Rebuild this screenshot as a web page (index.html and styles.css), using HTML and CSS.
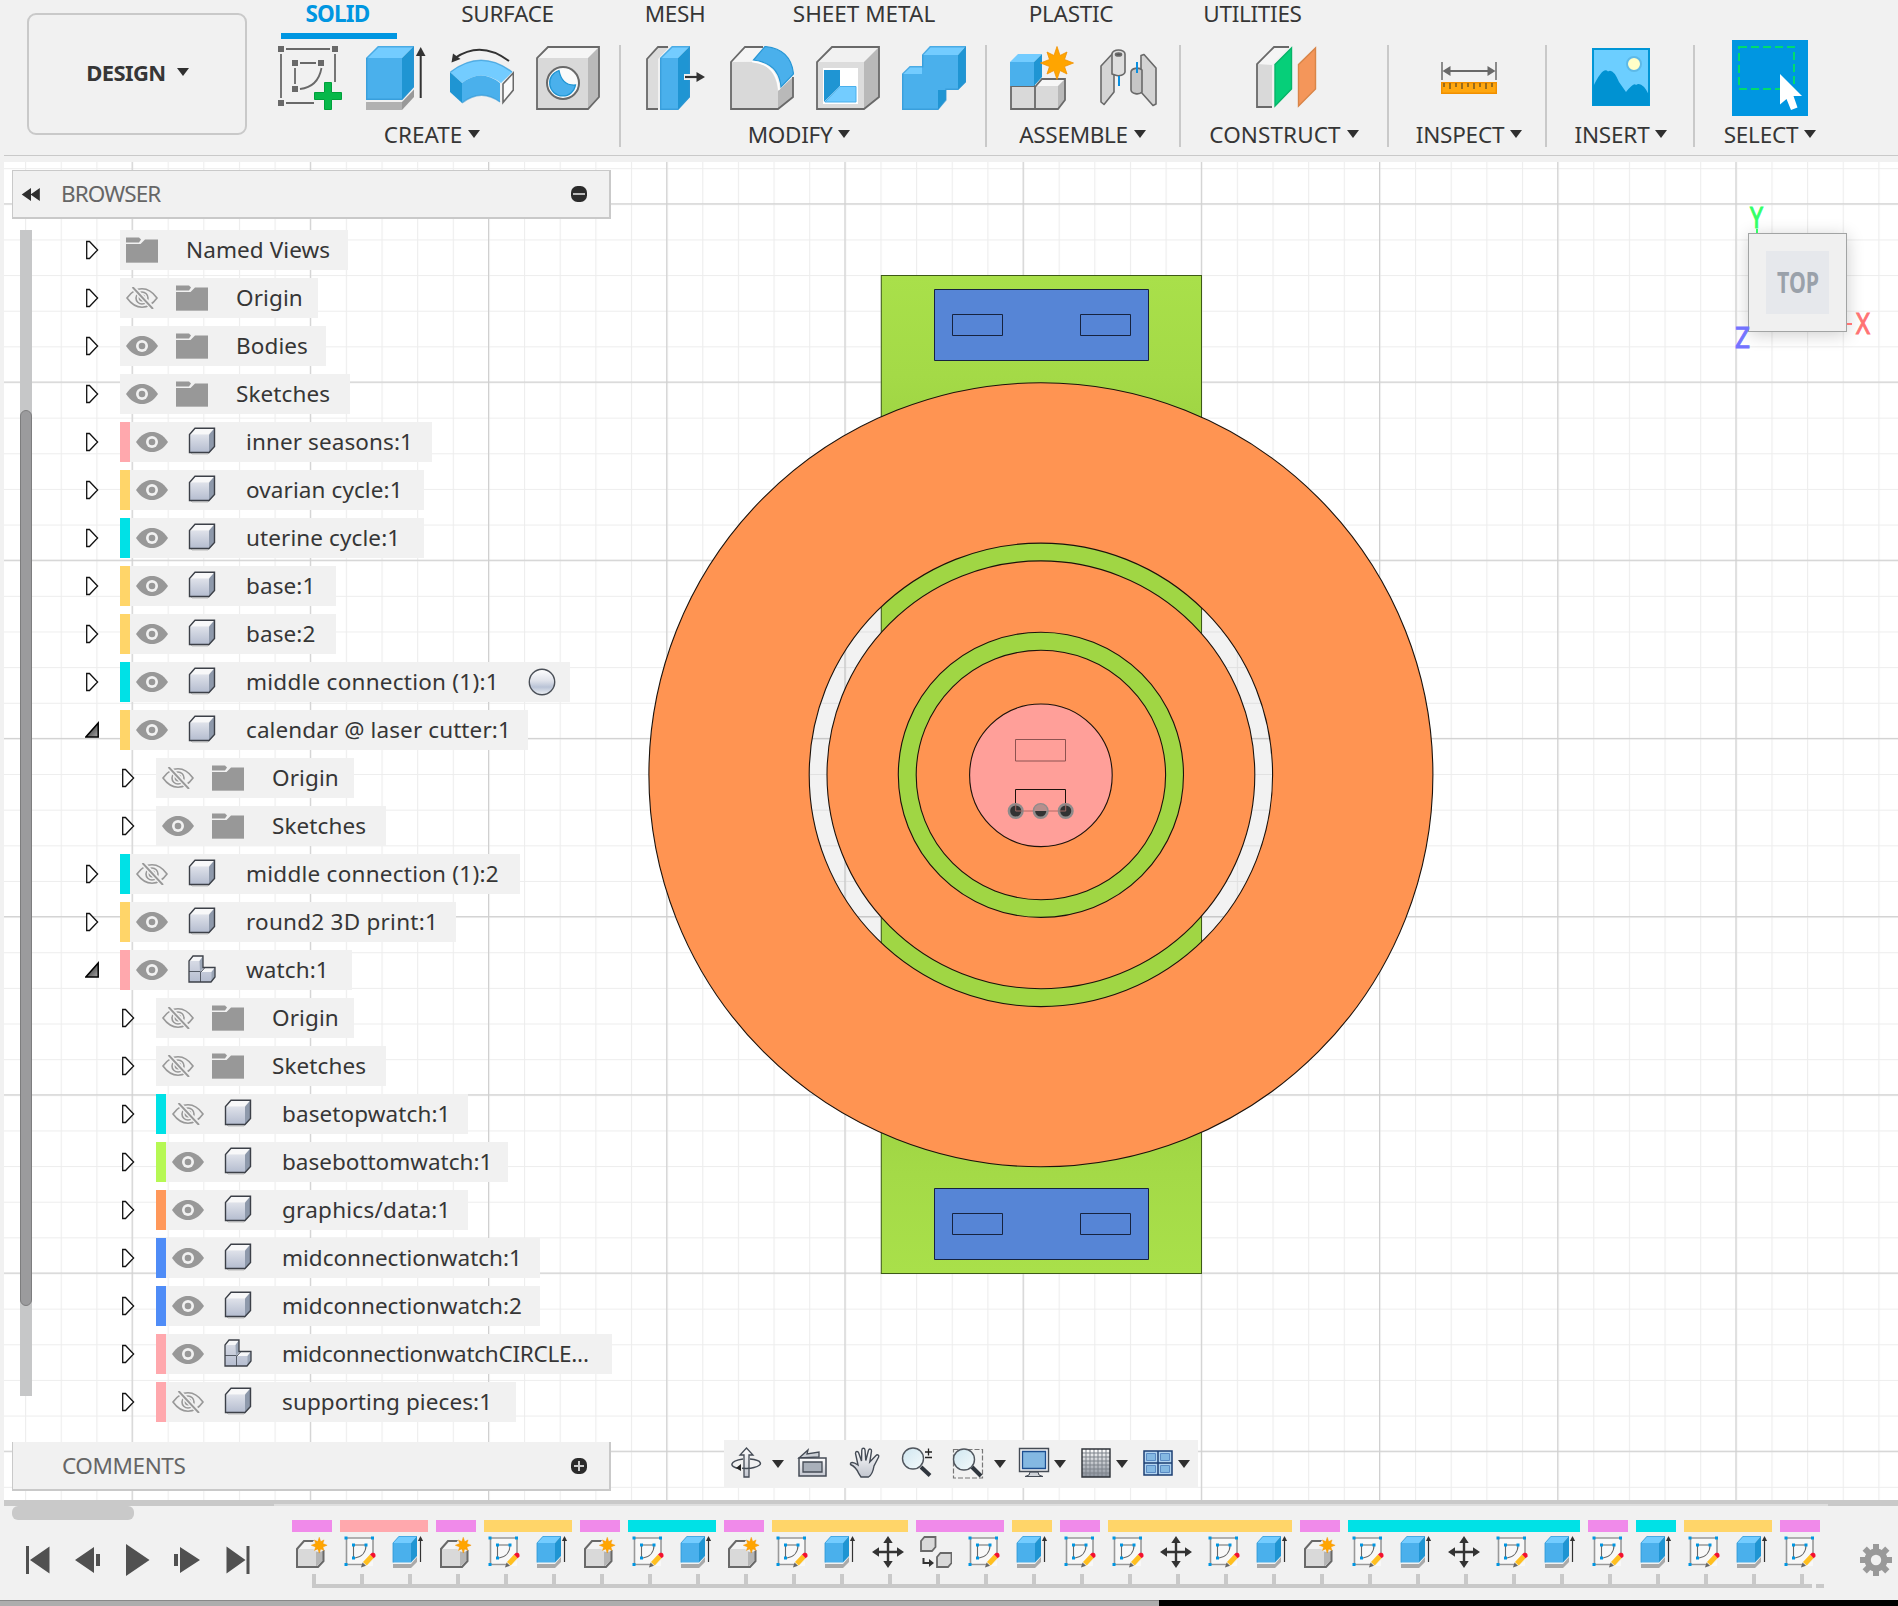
FILE: index.html
```html
<!DOCTYPE html>
<html lang="en">
<head>
<meta charset="utf-8">
<title>Design workspace</title>
<link rel="stylesheet" href="styles.css">
</head>
<body>
<svg class="defs" width="0" height="0">
  <defs>
    <linearGradient id="g-body" x1="0" y1="0" x2="0" y2="1"><stop offset="0" stop-color="#dfe2ea"/><stop offset="1" stop-color="#b4bccf"/></linearGradient>
    <linearGradient id="g-ball" x1="0" y1="0" x2="0" y2="1"><stop offset="0" stop-color="#ffffff"/><stop offset=".45" stop-color="#dfe2ea"/><stop offset=".7" stop-color="#b9c3d6"/><stop offset="1" stop-color="#eef1f5"/></linearGradient>
    <linearGradient id="g-open" x1="0" y1="0" x2="1" y2="1"><stop offset="0" stop-color="#111"/><stop offset="1" stop-color="#aaa"/></linearGradient>
    <linearGradient id="g-lens" x1="0" y1="0" x2="1" y2="1"><stop offset="0" stop-color="#cfe6f0"/><stop offset="1" stop-color="#f4fafb"/></linearGradient>
    <linearGradient id="g-steel" x1="0" y1="0" x2="0" y2="1"><stop offset="0" stop-color="#ffffff"/><stop offset="1" stop-color="#c2c6cf"/></linearGradient>
    <linearGradient id="g-mesh" x1="0" y1="0" x2="0" y2="1"><stop offset="0" stop-color="#ffffff"/><stop offset="1" stop-color="#8b929d"/></linearGradient>
    <symbol id="closed" viewBox="0 0 14 20"><path d="M1.700 1.500H4.500L12.600 10 4.500 18.500H1.700z" fill="#fff" stroke="#111" stroke-width="1.300"/></symbol>
    <symbol id="open" viewBox="0 0 14 16"><path d="M13.200 1V15H.8z" fill="url(#g-open)" stroke="#000" stroke-width="1.500"/></symbol>
    <symbol id="eye" viewBox="0 0 32 22"><path d="M0 11C5 3.500 10.500 1 16 1s11 2.500 16 10c-5 7.500-10.500 10-16 10S5 18.500 0 11z" fill="#989898"/><circle cx="16" cy="11" r="6" fill="#f1f1f1"/><circle cx="16" cy="11" r="3.300" fill="#989898"/></symbol>
    <symbol id="eye-off" viewBox="0 0 32 22"><g fill="none" stroke="#989898" stroke-width="1.600"><path d="M1 11C6 4 11 1.800 16 1.800S26 4 31 11c-5 7-10 9.200-15 9.200S6 18 1 11z"/><circle cx="16" cy="11" r="6"/><circle cx="16" cy="11" r="2.600"/></g><path d="M6.500 0L27.500 22" stroke="#f1f1f1" stroke-width="5"/><path d="M6.500 0L27 22" stroke="#989898" stroke-width="1.900"/></symbol>
    <symbol id="folder" viewBox="0 0 32 26"><path d="M0 .5h13l2 2-2 3H0z" fill="#989898"/><path d="M0 7h14.500l4.500-4.500h13V26H0z" fill="#989898"/><path d="M0 25.500H32" stroke="#b5b5b5"/></symbol>
    <symbol id="body" viewBox="0 0 28 28"><path d="M2 24.500L4 27H20l7-8" fill="none" stroke="#bbb"/><path d="M1.500 7.500L7 1.200H26.500L21 7.500z" fill="#f8f8f9"/><path d="M21 7.500l5.500-6.300V19L21 25.500z" fill="#8e99ab"/><path d="M1.500 7.500H21v18H1.500z" fill="url(#g-body)"/><path d="M1.500 25.500V7.500L7 1.200H26.500V19.500L21 25.500z" fill="none" stroke="#3c4048" stroke-width="1.400"/></symbol>
    <symbol id="assembly" viewBox="0 0 28 28"><path d="M1 27V6L5 1H15V12.500l2 0H27V22L23 27z" fill="url(#g-body)"/><path d="M1 6L5 1H15L11.500 6zM13 17l4-4.500H27L23.500 17z" fill="#f6f7f9"/><path d="M11.500 6L15 1V13L12 16.500zM23.500 17L27 12.500V22l-3.500 5z" fill="#9aa5b6"/><path d="M1 16.500H12M12.500 16.500V27M13 17l4-4.500" stroke="#555b66" fill="none"/><path d="M1 27V6L5 1H15V12.500H27V22L23 27z" fill="none" stroke="#3c4048" stroke-width="1.300"/></symbol>
    <symbol id="star" viewBox="-17 -17 34 34"><path d="M0-16.500L3-7.500 10-11 7.500-3.500 16.500 0 7.500 3.500 10 11 3 7.500 0 16.500-3 7.500-10 11-7.500 3.500-16.500 0-7.500-3.500-10-11-3-7.500z" fill="#ffa500" stroke="#f19000" stroke-width=".8"/></symbol>
    <symbol id="t-new" viewBox="0 0 32 32"><path d="M1 14L8 5H20L14 13z" fill="#f4f4f4"/><path d="M1 13H20V31H1z" fill="#d9d9d9"/><path d="M20 13l7-7V24l-7 7z" fill="#b5b5b5"/><path d="M18 5H8L1 13V31H22l5.500-6V14" fill="none" stroke="#696969" stroke-width="2"/><circle cx="23" cy="9" r="7" fill="#f1f1f1"/><use href="#star" x="15" y="1" width="16.500" height="16.500"/></symbol>
    <symbol id="t-sketch" viewBox="0 0 32 32"><path d="M3 2H29V30H3z" fill="#f8f8f8"/><path d="M3 2H29M2.500 2V29M29 3V18M3 28.500H18" stroke="#999" stroke-width="1.600" fill="none"/><path d="M9.500 9V22M10 9H22M22 9C22 16 18 21 11 22" stroke="#696969" stroke-width="1.100" fill="none"/><path d="M0.500 0.500h3v3h-3zM27 .5h3v3h-3zM.5 27h3v3h-3zM8 7.500h3v3H8zM20.500 7.500h3v3h-3zM8 20.500h3v3H8z" fill="#0096e1"/><path d="M18 31l2-6 8-8 4 5-8 7z" fill="#f1f1f1"/><path d="M17 31.500l1.500-5 3.500 3.200z" fill="#666"/><path d="M19 26l7-7.500 3.700 3.500-7 7.500z" fill="#ffbf1f"/><path d="M26 18.500l2-1.700q4-.8 3.500 3.700l-1.800 1.700z" fill="#f3102f"/></symbol>
    <symbol id="t-extrude" viewBox="0 0 32 32"><path d="M1 28H19V32H1zM19 28l6-7v5l-6 6z" fill="#a9a9a9"/><path d="M1 7L7 0H25L19 7z" fill="#73ccff"/><path d="M1 7H19V26.500H1z" fill="#4ab0ec"/><path d="M19 7l6-7V20l-6 6.500z" fill="#1f95d3"/><path d="M1 26.500V7L7 .3H25" fill="none" stroke="#2c97d5" stroke-width=".8"/><path d="M28.500 4V26" stroke="#333" stroke-width="1.200"/><path d="M28.500 0l2.600 5h-5.200z" fill="#333"/></symbol>
    <symbol id="t-move" viewBox="0 0 32 32"><path d="M16 4V28M4 16H28" stroke="#333" stroke-width="2.400"/><path d="M16 0l4.700 7h-9.400zM16 32l4.700-7h-9.400zM0 16l7-4.700v9.400zM32 16l-7-4.700v9.400z" fill="#333"/></symbol>
    <symbol id="t-copy" viewBox="0 0 32 32"><g fill="#d9d9d9" stroke="#696969" stroke-width="1.800"><path d="M1 15V5l3.500-4H15.500V11l-3.500 4zM17 31V21l3.500-4H31.500V27L28 31z"/></g><path d="M3.500 22v5H10" stroke="#333" stroke-width="2" fill="none"/><path d="M14 27l-5-4v8z" fill="#333"/></symbol>
    <symbol id="caret" viewBox="0 0 12 8"><path d="M0 0H12L6 8z" fill="#2f2f2f"/></symbol>
  </defs>
</svg>

<header class="ribbon">
  <button class="workspace">DESIGN<svg class="caret"><use href="#caret"/></svg></button>
  <div class="ribbon-main">
    <nav class="tabs">
      <span class="tab active">SOLID</span><span class="tab">SURFACE</span><span class="tab">MESH</span><span class="tab sheet">SHEET METAL</span><span class="tab">PLASTIC</span><span class="tab">UTILITIES</span>
    </nav>
    <div class="tools">
      <section class="group create">
        <div class="icons">
          <svg viewBox="0 0 64 64"><g stroke="#696969" stroke-width="1.800" fill="none"><path d="M8 3H52M3 8V52M57 8V36M8 57H36M22 17H38M17 22V38M43.500 22Q40 41 22 43"/></g><path d="M0 0h6v6H0zM54 0h6v6h-6zM0 54h6v6H0zM14 14h6v6h-6zM40 14h6v6h-6zM14 40h6v6h-6z" fill="#696969"/><path d="M46.500 36.500h7v10h10v7h-10v10h-7v-10h-10v-7h10z" fill="#07b84a" stroke="#00a03b"/></svg>
          <svg viewBox="0 0 64 64"><path d="M2 56H38V64H2z" fill="#b1b1b1"/><path d="M38 56L50 43.500V51L38 64z" fill="#999"/><path d="M2 12L14 0H50L38 12z" fill="#73ccff"/><path d="M2 12H38V54H2z" fill="#4ab0ec"/><path d="M38 12L50 0V41L38 54z" fill="#1f95d3"/><path d="M2.700 53.300V12.300L14.300.7H49.300V41L38 53.300z" fill="none" stroke="#2f95d2" stroke-opacity=".6" stroke-width="1.400"/><path d="M56.700 8V52" stroke="#333" stroke-width="2"/><path d="M56.700 1l4.800 9h-9.600z" fill="#333"/></svg>
          <svg viewBox="0 0 64 64"><path d="M0 26Q31 2 62.500 26L51 37Q31 22 12 37z" fill="#73ccff"/><path d="M12 37Q31 22 50 37V56Q31 42 12 57z" fill="#4ab0ec"/><path d="M0 26L12 37V57L0 46z" fill="#1f95d3"/><path d="M.5 26Q31 2.500 62 26M12 57Q31 42 50 56" fill="none" stroke="#2f95d2" stroke-opacity=".6" stroke-width="1.500"/><path d="M53 38L63.300 27V44L53 56.500z" fill="#fafafa" stroke="#696969" stroke-width="1.600"/><path d="M59 15Q31-6 5 12" fill="none" stroke="#333" stroke-width="2"/><path d="M1.500 16.500l1.500-9 7.500 5.500z" fill="#333"/></svg>
          <svg viewBox="0 0 64 64"><path d="M1 12L12 1H63L52 12z" fill="#f5f5f5"/><path d="M1 12H52V63H1z" fill="#d9d9d9"/><path d="M52 12L63 1V51L52 63z" fill="#b9b9b9"/><path d="M1 63V12L12 1H63V51L52 63z" fill="none" stroke="#696969" stroke-width="1.800"/><circle cx="27" cy="37" r="16" fill="#fafafa" stroke="#696969" stroke-width="2"/><path d="M23 24.500a13 13 0 1 0 16.500 14.500Q26 40 23 24.500z" fill="#4ab0ec" stroke="#1f95d3" stroke-width="1.300"/></svg>
        </div>
        <div class="label">CREATE<svg class="caret"><use href="#caret"/></svg></div>
      </section>
      <section class="group modify">
        <div class="icons">
          <svg viewBox="0 0 64 64"><path d="M3 13L14 1H25L14 13V63H3z" fill="#dcdcdc"/><path d="M14 63H3V13L14 1H24" fill="none" stroke="#696969" stroke-width="1.800"/><path d="M16 12L28 0H46L34 12z" fill="#73ccff"/><path d="M16 12H34V64H16z" fill="#4ab0ec"/><path d="M34 12L46 0V51L34 64z" fill="#1f95d3"/><path d="M16.700 63.300V12.300L28.300.7H45.300V51L34 63.300z" fill="none" stroke="#2f95d2" stroke-opacity=".6" stroke-width="1.400"/><path d="M40 31H54" stroke="#f1f1f1" stroke-width="6"/><path d="M41 31H54" stroke="#333" stroke-width="2.200"/><path d="M61 31l-8.500-5v10z" fill="#333"/></svg>
          <svg viewBox="0 0 64 64"><path d="M1 16L15 1H34L23 15z" fill="#f5f5f5"/><path d="M1 16H22Q46 18 48 46V63H1z" fill="#d9d9d9"/><path d="M48 45L63 31V51L48 63z" fill="#b9b9b9"/><path d="M33 1H15L1 16V63H48L63 51V31" fill="none" stroke="#696969" stroke-width="1.800"/><path d="M23.500 14L35 .5Q61 3 63.500 28L51 41Q49 17 23.500 14z" fill="#4ab0ec" stroke="#2796d5" stroke-width="1.200"/><path d="M22 15.500Q47 18 49 44" fill="none" stroke="#fff" stroke-width="1.500"/></svg>
          <svg viewBox="0 0 64 64"><path d="M1 16L16 1H63L48 16z" fill="#f1f1f1"/><path d="M1 16H48V63H1z" fill="#dcdcdc"/><path d="M48 16L63 1V51L48 63z" fill="#b9b9b9"/><path d="M1 63V16L16 1H63V51L48 63z" fill="none" stroke="#696969" stroke-width="1.800"/><path d="M7 22H42V58H7z" fill="#fff"/><path d="M8 24H24V40L8 56z" fill="#1f95d3"/><path d="M24 40.500H40V56H9z" fill="#73ccff" stroke="#4ab0ec"/></svg>
          <svg viewBox="0 0 64 64"><path d="M0 28L8 20H20V9L28 0H64L56 9V20L20 28z" fill="#73ccff"/><path d="M0 28H20V9H56V44H36V64H0z" fill="#4ab0ec"/><path d="M56 9L64 0V36L56 44zM36 44H44V54L36 64z" fill="#1f95d3"/><path d="M.7 63.300V27.700L8 20.700H20.700V8.700L28.300.7H63.300V36L56 43.300H44V54L36 63.300z" fill="none" stroke="#2f95d2" stroke-opacity=".6" stroke-width="1.400"/></svg>
        </div>
        <div class="label">MODIFY<svg class="caret"><use href="#caret"/></svg></div>
      </section>
      <section class="group assemble">
        <div class="icons">
          <svg viewBox="0 0 64 64"><path d="M1 40H25V63H1zM25 40H48V63H25z" fill="#d9d9d9"/><path d="M25 40L33 33H55L48 40z" fill="#f6f6f6"/><path d="M48 40L55 33V54L48 63z" fill="#b9b9b9"/><path d="M1 40V63H48L55 54V33H32L25 41V63M1 40H25" fill="none" stroke="#696969" stroke-width="1.800"/><path d="M0 16L8 8H32L24 16z" fill="#73ccff"/><path d="M0 16H24V40H0z" fill="#4ab0ec"/><path d="M24 16L32 8V31L24 40z" fill="#1f95d3"/><circle cx="47" cy="18" r="14" fill="#f1f1f1"/><use href="#star" x="30" y="0" width="34" height="34"/></svg>
          <svg viewBox="0 0 64 64"><g stroke="#696969" stroke-width="1.600" stroke-linejoin="round"><path d="M5 20L18 6V46L8 58.500 5 56z" fill="#d4d4d4"/><path d="M16 8a6.500 4 0 0 1 13 0V26a6.500 4 0 0 1-10 3L16 28z" fill="#dedede"/><ellipse cx="22.500" cy="8.500" rx="3" ry="1.500" fill="#555"/><path d="M45 9.500L48 8.500 60 22V58L57 59.500 45 46z" fill="#d4d4d4"/><path d="M35 26a6 4 0 0 1 11-2V46a6 4 0 0 1-11-2z" fill="#c6c6c6"/></g><path d="M23 30V40M41 16V27" stroke="#0a8fe0" stroke-width="2"/></svg>
        </div>
        <div class="label">ASSEMBLE<svg class="caret"><use href="#caret"/></svg></div>
      </section>
      <section class="group construct">
        <div class="icons">
          <svg viewBox="0 0 64 64"><path d="M3 18H18V61H3z" fill="#d9d9d9"/><path d="M3 18L20 1H34L18 19z" fill="#f5f5f5"/><path d="M18 61H3V18L20 1H35" fill="none" stroke="#696969" stroke-width="1.800"/><path d="M21 18.500L37.500 2V43L21 60z" fill="#06cf79" stroke="#06b468" stroke-width="1.400"/><path d="M44.500 18.500L61.500 2V43L44.500 60z" fill="#f4965a" stroke="#d98548" stroke-width="1.400"/></svg>
        </div>
        <div class="label">CONSTRUCT<svg class="caret"><use href="#caret"/></svg></div>
      </section>
      <section class="group inspect">
        <div class="icons">
          <svg viewBox="0 0 64 64"><path d="M5 16V34M59 16V34" stroke="#696969" stroke-width="1.500"/><path d="M10 25H54" stroke="#696969" stroke-width="2.200"/><path d="M5.500 25l8-5v10zM58.500 25l-8-5v10z" fill="#696969"/><path d="M4.700 36.700H59.300V47.300H4.700z" fill="#ffa70f" stroke="#f19000" stroke-width="1.400"/><path d="M7 37v4M13 37v6M19 37v4M25 37v6M31 37v4M37 37v6M43 37v4M49 37v6M55 37v4" stroke="#7a5a20" stroke-width="1.500"/></svg>
        </div>
        <div class="label">INSPECT<svg class="caret"><use href="#caret"/></svg></div>
      </section>
      <section class="group insert">
        <div class="icons">
          <svg viewBox="0 0 64 64"><path d="M4 3H60V59H4z" fill="#6cceff" stroke="#0096d6" stroke-width="2"/><path d="M4 41Q14 20 19 25.500 24 22 30 36L37 46Q45 36 47 39 53 35 60 49V59H4z" fill="#0092d2"/><circle cx="45" cy="18" r="7" fill="#ffffc8" stroke="#5db9e8" stroke-width="2"/></svg>
        </div>
        <div class="label">INSERT<svg class="caret"><use href="#caret"/></svg></div>
      </section>
      <section class="group select">
        <div class="icons">
          <svg class="picked" viewBox="0 0 76 76"><path d="M0 0H76V76H0z" fill="#0096e1"/><path d="M7 7H62V49H7z" fill="none" stroke="#00dc6e" stroke-width="2" stroke-dasharray="8 4"/><path d="M48 34L70 56H61.500L65.500 67.500 59 70 54.500 59 48 64.500z" fill="#fff"/></svg>
        </div>
        <div class="label">SELECT<svg class="caret"><use href="#caret"/></svg></div>
      </section>
    </div>
  </div>
</header>

<main class="viewport">
  <svg class="scene" viewBox="4 162 1894 1338">
    <defs>
      <pattern id="minor" x="132" y="203.800" width="35.640" height="35.640" patternUnits="userSpaceOnUse"><path d="M0 0H35.640V1.100H0zM0 0H1.100V35.640H0z" fill="#ededed"/></pattern>
      <pattern id="major" x="131.600" y="203.300" width="178.200" height="178.200" patternUnits="userSpaceOnUse"><path d="M0 0H178.200V1.200H0zM0 0H1.200V178.200H0z" fill="#d0d0d0"/></pattern>
      <filter id="soft" x="-20%" y="-20%" width="140%" height="140%"><feGaussianBlur stdDeviation="9"/></filter>
      <linearGradient id="lime" x1="0" y1="0" x2="0" y2="1"><stop offset="0" stop-color="#a9e04a"/><stop offset=".1" stop-color="#a4da47"/><stop offset=".14" stop-color="#a0d644"/><stop offset=".86" stop-color="#a0d644"/><stop offset=".9" stop-color="#a4da47"/><stop offset="1" stop-color="#a9e04a"/></linearGradient>
    </defs>
    <rect x="4" y="162" width="1894" height="1338" fill="#fff"/>
    <rect x="4" y="162" width="1894" height="1338" fill="url(#minor)"/>
    <rect x="4" y="162" width="1894" height="1338" fill="url(#major)"/>
    <circle cx="1040.900" cy="774.800" r="222" fill="none" stroke="#000" stroke-opacity=".05" stroke-width="22"/>
    <rect x="881.300" y="275.500" width="320.200" height="998" fill="url(#lime)" stroke="#3d5a16"/>
    <path fill-rule="evenodd" d="M648.900 774.800a392 392 0 1 0 784 0a392 392 0 1 0-784 0zM809.200 774.800a231.700 231.700 0 1 0 463.400 0a231.700 231.700 0 1 0-463.400 0z" fill="#ff9452" stroke="#1c120b" stroke-width="1.100"/>
    <path fill-rule="evenodd" d="M827 774.800a213.900 213.900 0 1 0 427.800 0a213.900 213.900 0 1 0-427.800 0zM898.300 774.800a142.600 142.600 0 1 0 285.200 0a142.600 142.600 0 1 0-285.200 0z" fill="#ff9452" stroke="#1c120b" stroke-width="1.100"/>
    <circle cx="1040.900" cy="775" r="124.700" fill="#ff9452" stroke="#1c120b" stroke-width="1.100"/>
    <circle cx="1040.900" cy="775.300" r="71.300" fill="#ff9f99" stroke="#1c120b" stroke-width="1.100"/>
    <g fill="#5685d6" stroke="#16233f"><path d="M934.500 289.500H1148.500V360.500H934.500zM934.500 1188.500H1148.500V1259.500H934.500z"/></g>
    <path d="M952.500 314.500h50v21h-50zM1080.500 314.500h50v21h-50zM952.500 1213.500h50v21h-50zM1080.500 1213.500h50v21h-50z" fill="none" stroke="#16233f"/>
    <path d="M1015.500 739.500h50v21.500h-50z" fill="none" stroke="#8d5350"/>
    <path d="M1015.500 811V789.500h50V811" fill="none" stroke="#1c120b"/><path d="M1015.700 811h50" stroke="#b06a66"/>
    <g fill="#333" stroke="#8f8b8b" stroke-width="2.500"><circle cx="1015.700" cy="811" r="6.800"/><circle cx="1040.700" cy="811" r="6.800"/><circle cx="1065.700" cy="811" r="6.800"/></g>
    <path d="M1034 811a6.700 6.700 0 0 1 13.400 0z" fill="#b58f8d"/>
    <path d="M1015.700 811v-7M1015.700 811h7M1065.700 811v-7M1065.700 811h-7" stroke="#a06a66"/>
    <g class="viewcube">
      <rect x="1749" y="236" width="98" height="98" fill="#000" opacity=".2" filter="url(#soft)"/>
      <path d="M1757 229v5" stroke="#33ff66" stroke-width="2"/><path d="M1847 324h5" stroke="#ff7373" stroke-width="2"/>
      <rect x="1748.500" y="233.500" width="98" height="98" fill="#f0f0f0" stroke="#a2a4a4"/>
      <rect x="1766" y="251" width="63" height="63" fill="#e6e8ec"/>
      <text x="1777" y="293" textLength="42" lengthAdjust="spacingAndGlyphs" class="face">TOP</text>
      <text x="1750" y="228" textLength="13" lengthAdjust="spacingAndGlyphs" class="axis" fill="#33ff66" stroke="#33ff66">Y</text>
      <text x="1856" y="334" textLength="14" lengthAdjust="spacingAndGlyphs" class="axis" fill="#ff7373" stroke="#ff7373">X</text>
      <text x="1735" y="348" textLength="15" lengthAdjust="spacingAndGlyphs" class="axis" fill="#7373ff" stroke="#7373ff">Z</text>
    </g>
  </svg>

  <aside class="sidebar">
    <div class="panel-head browser">
      <svg class="rewind" viewBox="0 0 20 14"><path d="M10 0V14L0 7zM19.500 0V14L9.500 7z" fill="#2f2f2f"/></svg>
      <span>BROWSER</span>
      <svg class="toggle" viewBox="0 0 16 16"><rect width="16" height="16" rx="6.500" fill="#2b2b2b"/><path d="M2 8H14" stroke="#bbb" stroke-width="2"/></svg>
    </div>
    <div class="tree-wrap">
      <div class="track"><div class="thumb"></div></div>
      <ul class="tree">
        <li><svg class="tw"><use href="#closed"/></svg><div class="node" style="width:228px"><svg class="fo"><use href="#folder"/></svg><span>Named Views</span></div></li>
        <li><svg class="tw"><use href="#closed"/></svg><div class="node" style="width:198px"><svg class="ey"><use href="#eye-off"/></svg><svg class="fo"><use href="#folder"/></svg><span>Origin</span></div></li>
        <li><svg class="tw"><use href="#closed"/></svg><div class="node" style="width:206px"><svg class="ey"><use href="#eye"/></svg><svg class="fo"><use href="#folder"/></svg><span>Bodies</span></div></li>
        <li><svg class="tw"><use href="#closed"/></svg><div class="node" style="width:230px"><svg class="ey"><use href="#eye"/></svg><svg class="fo"><use href="#folder"/></svg><span>Sketches</span></div></li>
        <li><svg class="tw"><use href="#closed"/></svg><div class="node comp pink" style="width:312px"><svg class="ey"><use href="#eye"/></svg><svg class="bo"><use href="#body"/></svg><span>inner seasons:1</span></div></li>
        <li><svg class="tw"><use href="#closed"/></svg><div class="node comp yellow" style="width:304px"><svg class="ey"><use href="#eye"/></svg><svg class="bo"><use href="#body"/></svg><span>ovarian cycle:1</span></div></li>
        <li><svg class="tw"><use href="#closed"/></svg><div class="node comp cyan" style="width:304px"><svg class="ey"><use href="#eye"/></svg><svg class="bo"><use href="#body"/></svg><span>uterine cycle:1</span></div></li>
        <li><svg class="tw"><use href="#closed"/></svg><div class="node comp yellow" style="width:216px"><svg class="ey"><use href="#eye"/></svg><svg class="bo"><use href="#body"/></svg><span>base:1</span></div></li>
        <li><svg class="tw"><use href="#closed"/></svg><div class="node comp yellow" style="width:216px"><svg class="ey"><use href="#eye"/></svg><svg class="bo"><use href="#body"/></svg><span>base:2</span></div></li>
        <li><svg class="tw"><use href="#closed"/></svg><div class="node comp cyan" style="width:450px"><svg class="ey"><use href="#eye"/></svg><svg class="bo"><use href="#body"/></svg><span class="loose">middle connection (1):1</span><svg class="ball" viewBox="0 0 28 28"><circle cx="14" cy="14" r="12.700" fill="url(#g-ball)" stroke="#4a4f57" stroke-width="1.400"/></svg></div></li>
        <li><svg class="tw"><use href="#open"/></svg><div class="node comp yellow" style="width:408px"><svg class="ey"><use href="#eye"/></svg><svg class="bo"><use href="#body"/></svg><span>calendar @ laser cutter:1</span></div></li>
        <li class="deep"><svg class="tw"><use href="#closed"/></svg><div class="node" style="width:198px"><svg class="ey"><use href="#eye-off"/></svg><svg class="fo"><use href="#folder"/></svg><span>Origin</span></div></li>
        <li class="deep"><svg class="tw"><use href="#closed"/></svg><div class="node" style="width:230px"><svg class="ey"><use href="#eye"/></svg><svg class="fo"><use href="#folder"/></svg><span>Sketches</span></div></li>
        <li><svg class="tw"><use href="#closed"/></svg><div class="node comp cyan" style="width:400px"><svg class="ey"><use href="#eye-off"/></svg><svg class="bo"><use href="#body"/></svg><span class="loose">middle connection (1):2</span></div></li>
        <li><svg class="tw"><use href="#closed"/></svg><div class="node comp yellow" style="width:336px"><svg class="ey"><use href="#eye"/></svg><svg class="bo"><use href="#body"/></svg><span class="loose">round2 3D print:1</span></div></li>
        <li><svg class="tw"><use href="#open"/></svg><div class="node comp pink" style="width:232px"><svg class="ey"><use href="#eye"/></svg><svg class="bo"><use href="#assembly"/></svg><span>watch:1</span></div></li>
        <li class="deep"><svg class="tw"><use href="#closed"/></svg><div class="node" style="width:198px"><svg class="ey"><use href="#eye-off"/></svg><svg class="fo"><use href="#folder"/></svg><span>Origin</span></div></li>
        <li class="deep"><svg class="tw"><use href="#closed"/></svg><div class="node" style="width:230px"><svg class="ey"><use href="#eye-off"/></svg><svg class="fo"><use href="#folder"/></svg><span>Sketches</span></div></li>
        <li class="deep"><svg class="tw"><use href="#closed"/></svg><div class="node comp cyan" style="width:312px"><svg class="ey"><use href="#eye-off"/></svg><svg class="bo"><use href="#body"/></svg><span>basetopwatch:1</span></div></li>
        <li class="deep"><svg class="tw"><use href="#closed"/></svg><div class="node comp lime" style="width:352px"><svg class="ey"><use href="#eye"/></svg><svg class="bo"><use href="#body"/></svg><span class="tight">basebottomwatch:1</span></div></li>
        <li class="deep"><svg class="tw"><use href="#closed"/></svg><div class="node comp orange" style="width:312px"><svg class="ey"><use href="#eye"/></svg><svg class="bo"><use href="#body"/></svg><span class="loose">graphics/data:1</span></div></li>
        <li class="deep"><svg class="tw"><use href="#closed"/></svg><div class="node comp blue" style="width:384px"><svg class="ey"><use href="#eye"/></svg><svg class="bo"><use href="#body"/></svg><span class="tight">midconnectionwatch:1</span></div></li>
        <li class="deep"><svg class="tw"><use href="#closed"/></svg><div class="node comp blue" style="width:384px"><svg class="ey"><use href="#eye"/></svg><svg class="bo"><use href="#body"/></svg><span class="tight">midconnectionwatch:2</span></div></li>
        <li class="deep"><svg class="tw"><use href="#closed"/></svg><div class="node comp pink" style="width:456px"><svg class="ey"><use href="#eye"/></svg><svg class="bo"><use href="#assembly"/></svg><span class="long">midconnectionwatchCIRCLE...</span></div></li>
        <li class="deep"><svg class="tw"><use href="#closed"/></svg><div class="node comp pink" style="width:360px"><svg class="ey"><use href="#eye-off"/></svg><svg class="bo"><use href="#body"/></svg><span>supporting pieces:1</span></div></li>
      </ul>
    </div>
    <div class="panel-head comments">
      <span>COMMENTS</span>
      <svg class="toggle" viewBox="0 0 16 16"><rect width="16" height="16" rx="6.500" fill="#2b2b2b"/><path d="M3 8H13M8 3V13" stroke="#ccc" stroke-width="2"/></svg>
    </div>
  </aside>

  <div class="navbar">
    <svg class="tool orbit" viewBox="0 0 32 32"><path d="M13 24V8h-4L15.500 1 22 8h-4V30h-5z" fill="url(#g-steel)" stroke="#444b55" stroke-width="1.300"/><path d="M12 12C-2 14-2 20 8 21.500M19 12c12 1 14 6 4 8.500-3 1-9 1-12 .8" fill="none" stroke="#444b55" stroke-width="1.500"/><path d="M5 21l5-4v7z" fill="#222"/></svg>
    <svg class="caret"><use href="#caret"/></svg>
    <svg class="tool look" viewBox="0 0 32 32"><path d="M2 11L11 3l-1 4 12-2v5z" fill="#ccd0d6" stroke="#444b55" stroke-width="1.300"/><path d="M2 11H29V29H2z" fill="url(#g-steel)" stroke="#444b55" stroke-width="1.500"/><path d="M6 15H25V25H6z" fill="#a9b0ba" stroke="#444b55" stroke-width="1.300"/></svg>
    <svg class="tool hand" viewBox="0 0 32 32"><path d="M10 27C8 22 5 19 1.500 17.500 1 15 4 14.500 9 18L6.500 6.500c0-2.500 2.500-2.500 3.200-.5L12.500 14 12.800 3c.2-2.300 3-2.300 3.200 0L16.800 13.500 19.500 3.300c.8-2 3.300-1.400 3 .8L20.800 15 27 8.500c1.600-1.500 3.500 0 2.500 1.800L25 19c-1 6-2 9-5.500 11H12z" fill="url(#g-steel)" stroke="#444b55" stroke-width="1.400"/></svg>
    <svg class="tool zoom" viewBox="0 0 32 32"><path d="M20 20l9 8.500" stroke="#30363e" stroke-width="4"/><circle cx="12" cy="11.500" r="10.500" fill="url(#g-lens)" stroke="#50565e" stroke-width="1.400"/><path d="M24 5h7M27.500 1.500v7M24 10.500h7" stroke="#222" stroke-width="1.300"/></svg>
    <svg class="tool window" viewBox="0 0 32 32"><path d="M1.500 2.500H30.500V31H1.500z" fill="none" stroke="#777" stroke-width="1.200" stroke-dasharray="5 2"/><path d="M20 20l9 9" stroke="#30363e" stroke-width="4"/><circle cx="12" cy="12.500" r="10.500" fill="url(#g-lens)" stroke="#50565e" stroke-width="1.400"/></svg>
    <svg class="caret"><use href="#caret"/></svg>
    <svg class="tool display" viewBox="0 0 32 32"><path d="M12 25h8l1 3 4 1.500H7l4-1.500z" fill="#cfd3d8" stroke="#444b55"/><path d="M1.500 1.500H30.500V24.500H1.500z" fill="#f4f4f6" stroke="#444b55" stroke-width="1.400"/><path d="M4.500 4.500H27.500V21.500H4.500z" fill="#84b8e2" stroke="#1d4f91" stroke-width="1.300"/></svg>
    <svg class="caret"><use href="#caret"/></svg>
    <svg class="tool mesh" viewBox="0 0 32 32"><path d="M2 2H30V30H2z" fill="url(#g-mesh)"/><path d="M2 6H30M2 10H30M2 14H30M2 18H30M2 22H30M2 26H30M6 2V30M10 2V30M14 2V30M18 2V30M22 2V30M26 2V30" stroke="#7d828a"/><path d="M2 2H30V30H2z" fill="none" stroke="#2e3238" stroke-width="1.400"/></svg>
    <svg class="caret"><use href="#caret"/></svg>
    <svg class="tool views" viewBox="0 0 32 32"><path d="M2 4H30V28H2z" fill="#b4d5f0" stroke="#1d3f73" stroke-width="1.500"/><path d="M16 4V28M2 16H30" stroke="#1d3f73" stroke-width="1.500"/><path d="M4.500 6.500h9v7h-9zM18.500 6.500h9v7h-9zM4.500 18.500h9v7h-9zM18.500 18.500h9v7h-9z" fill="#84b8e2" stroke="#5a8bc4"/></svg>
    <svg class="caret"><use href="#caret"/></svg>
  </div>
</main>

<footer class="timeline">
  <div class="split"><i></i></div>
  <div class="hscroll"></div>
  <div class="timeline-row">
    <div class="playback">
      <svg viewBox="0 0 26 32"><path d="M1 2h3v28H1zM24.500 2.500V29.500L5 16z" fill="#505050"/></svg>
      <svg viewBox="0 0 26 32"><path d="M0 16L19 3V29zM21 10h4v12h-4z" fill="#505050"/></svg>
      <svg viewBox="0 0 26 32"><path d="M1 0V32L24.500 16z" fill="#505050"/></svg>
      <svg viewBox="0 0 26 32"><path d="M-1 10h4v12h-4zM5 3V29L25 16z" fill="#505050"/></svg>
      <svg viewBox="0 0 26 32"><path d="M21.500 2h3v28h-3zM1.500 2.500V29.500L20.500 16z" fill="#505050"/></svg>
    </div>
    <div class="history">
      <b class="violet"></b><b class="pink s2"></b><b class="violet"></b><b class="yellow s2"></b><b class="violet"></b><b class="cyan s2"></b><b class="violet"></b><b class="yellow s3"></b><b class="violet s2"></b><b class="yellow"></b><b class="violet"></b><b class="yellow s4"></b><b class="violet"></b><b class="cyan s5"></b><b class="violet"></b><b class="cyan"></b><b class="yellow s2"></b><b class="violet"></b>
      <svg><use href="#t-new"/></svg><svg><use href="#t-sketch"/></svg><svg><use href="#t-extrude"/></svg><svg><use href="#t-new"/></svg><svg><use href="#t-sketch"/></svg><svg><use href="#t-extrude"/></svg><svg><use href="#t-new"/></svg><svg><use href="#t-sketch"/></svg><svg><use href="#t-extrude"/></svg><svg><use href="#t-new"/></svg><svg><use href="#t-sketch"/></svg><svg><use href="#t-extrude"/></svg><svg><use href="#t-move"/></svg><svg><use href="#t-copy"/></svg><svg><use href="#t-sketch"/></svg><svg><use href="#t-extrude"/></svg><svg><use href="#t-sketch"/></svg><svg><use href="#t-sketch"/></svg><svg><use href="#t-move"/></svg><svg><use href="#t-sketch"/></svg><svg><use href="#t-extrude"/></svg><svg><use href="#t-new"/></svg><svg><use href="#t-sketch"/></svg><svg><use href="#t-extrude"/></svg><svg><use href="#t-move"/></svg><svg><use href="#t-sketch"/></svg><svg><use href="#t-extrude"/></svg><svg><use href="#t-sketch"/></svg><svg><use href="#t-extrude"/></svg><svg><use href="#t-sketch"/></svg><svg><use href="#t-extrude"/></svg><svg><use href="#t-sketch"/></svg>
      <div class="ruler"><i></i><u></u></div>
    </div>
    <svg class="gear" viewBox="-16 -16 32 32"><g fill="#999"><path id="cog" d="M-3-16H3V16H-3z"/><use href="#cog" transform="rotate(45)"/><use href="#cog" transform="rotate(90)"/><use href="#cog" transform="rotate(135)"/><circle r="11.500"/></g><circle r="5.200" fill="#f1f1f1"/></svg>
  </div>
  <div class="edge"><i></i></div>
</footer>
</body>
</html>
```
FILE: styles.css
```css
* { box-sizing: border-box; }
body {
  margin: 0;
  width: 1898px;
  height: 1606px;
  overflow: hidden;
  background: #f1f1f1;
  color: #363636;
  font: 22.5px/30px "Noto Sans", "Open Sans", sans-serif;
  display: flex;
  flex-direction: column;
}
svg { display: block; flex: none; }
.defs { position: absolute; }
.caret { width: 12px; height: 8px; }

/* Ribbon */
.ribbon { height: 162px; flex: none; display: flex; padding: 0 0 6px 4px; }
.ribbon { background: linear-gradient(#c9c9c9, #c9c9c9) 4px 155px / 100% 1px no-repeat; }
.workspace {
  margin: 13px 0 0 23px;
  width: 220px;
  height: 122px;
  border: 2px solid #c9c9c9;
  border-radius: 9px;
  background: none;
  color: inherit;
  font: bold 22px/30px "Noto Sans", sans-serif;
  letter-spacing: -0.6px;
  display: flex;
  align-items: center;
  justify-content: center;
  gap: 11px;
  padding: 0 0 4px 1px;
}
.ribbon-main { display: flex; flex-direction: column; }
.tabs { display: grid; grid-template-columns: 116px 221px 114px 264px 150px 213px; margin-left: 34px; height: 39px; text-align: center; letter-spacing: -0.3px; line-height: 27px; }
.tab.sheet { letter-spacing: 0; }
.tab.active { color: #0096e1; font-weight: bold; border-bottom: 6px solid #0096e1; letter-spacing: -0.8px; padding-right: 3px; }
.tools { display: flex; margin-left: 11px; }
.group {
  display: flex;
  flex-direction: column;
  align-items: center;
  padding: 7px 0 0 4px;
  height: 108px;
  background: linear-gradient(#c9c9c9, #c9c9c9) right 6px / 2px 102px no-repeat;
  border-right: 2px solid transparent;
  background-origin: border-box;
}
.create { width: 363px; padding-left: 1px; }
.modify { width: 366px; }
.assemble { width: 194px; }
.construct { width: 208px; }
.inspect { width: 158px; }
.insert { width: 148px; padding-left: 2px; }
.select { width: 148px; background: none; }
.icons { display: flex; gap: 22px; height: 64px; }
.icons svg { width: 64px; height: 64px; }
.icons .picked { width: 76px; height: 76px; margin-top: -6px; }
.label { display: flex; align-items: center; gap: 6px; line-height: 30px; margin-top: 10px; letter-spacing: -0.2px; padding-right: 4px; white-space: nowrap; }
.create .label { padding-right: 14px; letter-spacing: 0; }
.modify .label { padding-right: 12px; letter-spacing: -0.3px; }
.assemble .label { padding-right: 5px; letter-spacing: -0.3px; }
.construct .label { letter-spacing: 0.1px; }
.inspect .label, .insert .label, .select .label { padding-right: 0; }
.label .caret { margin-top: -3px; }

/* Canvas */
.viewport { position: relative; flex: none; height: 1338px; margin-left: 4px; display: flex; align-items: flex-start; }
.scene { position: absolute; inset: 0; width: 1894px; height: 1338px; }
.face { font: bold 29px "Noto Sans", sans-serif; fill: #9aa1aa; }
.axis { font: 29px "Noto Sans", sans-serif; stroke-width: 1px; }

/* Browser */
.sidebar { position: relative; width: 599px; margin: 8px 0 0 8px; }
.panel-head {
  height: 49px;
  border: 1px solid #c9c9c9;
  border-width: 1px 2px 2px 1px;
  background: #f1f1f1;
  color: #666;
  display: flex;
  align-items: center;
  padding: 0 22px 0 9px;
  letter-spacing: -0.4px;
}
.panel-head span { flex: 1; padding-left: 20px; }
.browser { letter-spacing: -0.9px; }
.rewind { width: 20px; height: 13px; margin-left: -1px; }
.toggle { width: 16px; height: 16px; }
.comments { margin-top: 20px; border-top: 0; padding: 0 22px 0 29px; }
.tree-wrap { display: flex; margin-top: 11px; }
.track { width: 12px; height: 1166px; margin-left: 8px; background: #c6c7c8; padding-top: 180px; }
.thumb { height: 896px; border: 1px solid #7d7d7e; border-radius: 6px; background: #9b9b9d; }
.tree { list-style: none; margin: 0; padding: 0; width: 580px; display: flex; flex-direction: column; gap: 8px; letter-spacing: 0.1px; }
.tree { height: 1192px; margin-right: -2px; }
.tree li { display: flex; align-items: center; height: 40px; padding-left: 53px; }
.tree .deep { padding-left: 89px; }
.tw { width: 14px; height: 20px; margin-right: 21px; }
.node { flex: none; display: flex; align-items: center; height: 40px; background: #f1f1f1; padding-left: 6px; white-space: nowrap; }
.comp { border-left: 10px solid; }
.node span { padding: 0 0 1px 28px; }
.ey { width: 32px; height: 22px; }
.ey + .fo { margin-left: 18px; }
.fo { width: 32px; height: 26px; }
.bo { width: 28px; height: 28px; margin: -2px 0 0 20px; }
.comp .bo + span { padding-left: 30px; }
.node .loose { letter-spacing: 0.25px; }
.node .tight { letter-spacing: 0; }
.node .long { letter-spacing: -0.25px; }
.ball { width: 28px; height: 28px; margin-left: 29px; }
.comp.pink { border-color: #ffa8ad; }
.comp.yellow { border-color: #ffd569; }
.comp.cyan { border-color: #00e1e6; }
.comp.lime { border-color: #b6f854; }
.comp.orange { border-color: #ff985a; }
.comp.blue { border-color: #4f8cf7; }

/* View controls */
.navbar { position: relative; width: 474px; height: 48px; margin: 1278px 0 0 113px; background: #f1f1f1; display: flex; align-items: center; padding-left: 7px; }
.tool { width: 32px; height: 32px; margin-bottom: 2px; }
.orbit + .caret { margin-left: 9px; }
.look { margin-left: 13px; }
.hand { margin-left: 20px; }
.zoom { margin-left: 20px; }
.window { margin-left: 19px; }
.window + .caret { margin-left: 10px; }
.display { margin-left: 12px; }
.display + .caret, .mesh + .caret, .views + .caret { margin-left: 4px; }
.mesh { margin-left: 14px; }
.views { margin-left: 14px; }

/* Timeline */
.timeline { height: 106px; flex: none; display: flex; flex-direction: column; }
.split { height: 6px; margin-left: 4px; background: #c9c9c9; padding: 4px 70px 0 270px; }
.split i { display: block; height: 2px; background: #dedede; }
.hscroll { width: 122px; height: 14px; margin-left: 12px; background: #c9c9c9; border-radius: 6px; }
.timeline-row { display: flex; height: 80px; }
.playback { display: flex; gap: 24px; width: 267px; padding: 24px 0 0 25px; }
.playback svg { width: 26px; height: 32px; overflow: visible; }
.history { width: 1536px; height: 68px; margin-left: 25px; display: grid; grid-template-columns: repeat(32, 40px); grid-template-rows: 12px 32px 14px; column-gap: 8px; row-gap: 4px; }
.history svg { width: 32px; height: 32px; margin-left: 4px; }
.s2 { grid-column: span 2; }
.s3 { grid-column: span 3; }
.s4 { grid-column: span 4; }
.s5 { grid-column: span 5; }
.violet { background: #f08aea; }
b.pink { background: #ffa8ad; }
b.yellow { background: #ffd569; }
b.cyan { background: #00e1e6; }
.ruler { grid-column: 1 / -1; display: flex; gap: 4px; margin: 2px -4px 0 20px; height: 14px; align-items: flex-end; }
.ruler i { width: 1500px; height: 14px; background: linear-gradient(#c9c9c9, #c9c9c9) bottom / 100% 4px no-repeat, repeating-linear-gradient(90deg, #c9c9c9 0 4px, transparent 4px 48px); }
.ruler u { width: 8px; height: 4px; background: #c9c9c9; }
.gear { width: 32px; height: 32px; margin: 24px 0 0 32px; }
.edge { height: 6px; background: #000; }
.edge i { display: block; width: 1159px; height: 6px; background: #adadad; border-top: 1px solid #888; }
```
